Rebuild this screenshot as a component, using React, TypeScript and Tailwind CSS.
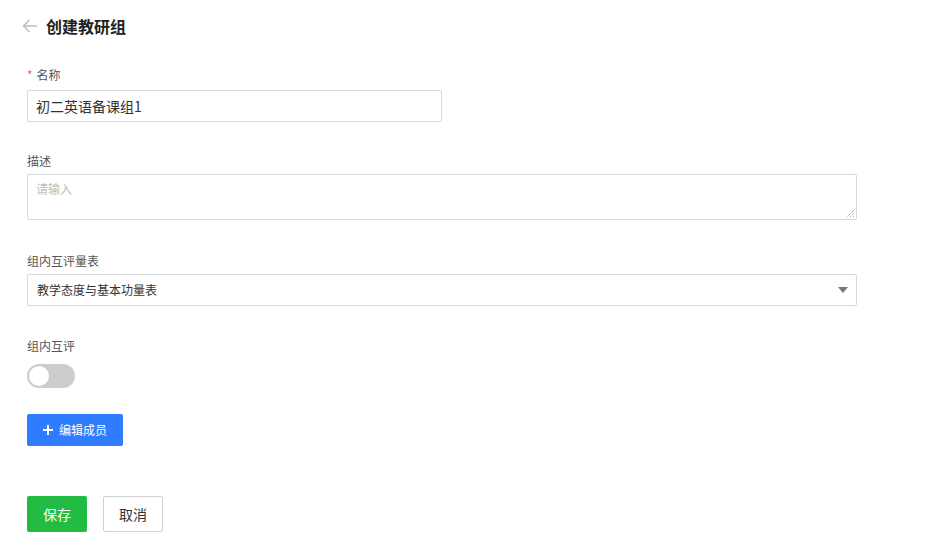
import React from "react";

export default function App() {
  const font = { fontFamily: '"Microsoft YaHei", "Noto Sans CJK SC", "Liberation Sans", sans-serif' };
  return (
    <div className="w-[942px] h-[549px] bg-white text-[#333]" style={font}>
      <div className="flex items-center h-[52px] pl-[22px]">
        <svg width="16" height="16" viewBox="0 0 16 16" className="text-[#c0c0c0]">
          <path d="M15 8H1.5M7.5 2L1.5 8l6 6" fill="none" stroke="currentColor" strokeWidth="1.6" />
        </svg>
        <span className="ml-[8px] text-[16px] font-bold text-[#222]">创建教研组</span>
      </div>
      <div className="pl-[27px] pt-[14px]">
        <div className="text-[12px] text-[#555] h-[18px] leading-[18px] flex items-center">
          <span className="text-[#f56c2c] mr-[4px]">*</span>名称
        </div>
        <div className="mt-[6px] w-[415px] h-[32px] border border-[#d9d9d9] rounded-[2px] flex items-center px-[8px] text-[14px] text-[#333]">
          初二英语备课组1
        </div>

        <div className="mt-[30px] text-[12px] text-[#555] h-[18px] leading-[18px]">描述</div>
        <div className="mt-[4px] relative w-[830px] h-[46px] border border-[#d9d9d9] rounded-[2px] px-[8px] pt-[5px] text-[12px] text-[#bbb]">
          请输入
          <svg width="10" height="10" viewBox="0 0 10 10" className="absolute right-[1px] bottom-[1px]">
            <path d="M9 2L2 9M9 5L5 9M9 8L8 9" stroke="#666" strokeWidth="0.8" strokeDasharray="1 1" />
          </svg>
        </div>

        <div className="mt-[32px] text-[12px] text-[#555] h-[18px] leading-[18px]">组内互评量表</div>
        <div className="mt-[4px] w-[830px] h-[32px] border border-[#d9d9d9] rounded-[2px] flex items-center justify-between pl-[9px] pr-[8px] text-[12px] text-[#333]">
          <span>教学态度与基本功量表</span>
          <svg width="10" height="6" viewBox="0 0 10 6">
            <path d="M0 0h10L5 6z" fill="#777" />
          </svg>
        </div>

        <div className="mt-[31px] text-[12px] text-[#555] h-[18px] leading-[18px]">组内互评</div>
        <div className="mt-[9px] w-[48px] h-[24px] rounded-full bg-[#ccc] relative">
          <div className="absolute left-[2px] top-[2px] w-[20px] h-[20px] rounded-full bg-white" />
        </div>

        <button className="mt-[26px] w-[96px] h-[32px] bg-[#2f7cff] rounded-[2px] text-white text-[12px] flex items-center justify-center gap-[6px]">
          <svg width="10" height="10" viewBox="0 0 10 10">
            <path d="M5 0v10M0 5h10" stroke="white" strokeWidth="2" />
          </svg>
          编辑成员
        </button>

        <div className="mt-[50px] flex gap-[16px]">
          <button className="w-[60px] h-[36px] bg-[#22bb44] rounded-[2px] text-white text-[14px]">保存</button>
          <button className="w-[60px] h-[36px] bg-white border border-[#d0d0d0] rounded-[2px] text-[#333] text-[14px]">取消</button>
        </div>
      </div>
    </div>
  );
}
